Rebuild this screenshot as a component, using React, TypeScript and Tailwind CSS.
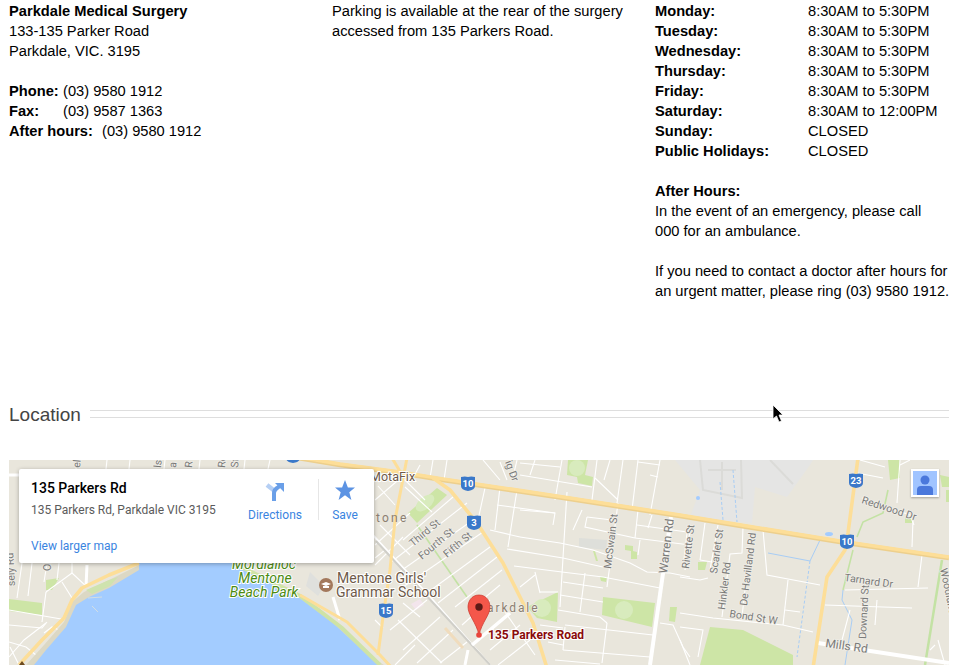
const hours = [
  ['Monday:', '8:30AM to 5:30PM'],
  ['Tuesday:', '8:30AM to 5:30PM'],
  ['Wednesday:', '8:30AM to 5:30PM'],
  ['Thursday:', '8:30AM to 5:30PM'],
  ['Friday:', '8:30AM to 5:30PM'],
  ['Saturday:', '8:30AM to 12:00PM'],
  ['Sunday:', 'CLOSED'],
  ['Public Holidays:', 'CLOSED'],
]

// all map coordinates are page coordinates, the viewBox starts at the map's corner
const streets = [
  // left of the bay
  'M22 563 L17 598', 'M32 563 L28 596', 'M47 563 L44 582', 'M59 563 L57 580', 'M46 592 L72 573 L87 587', 'M72 563 L72 573', 'M62 582 L72 598',
  'M46 592 L42 622', 'M9 610 L67 620', 'M9 625 L42 628 L47 622', 'M9 642 L26 647 L36 655', 'M9 657 L24 640 L46 623', 'M10 647 L19 665', 'M44 633 L52 627 L59 630 L56 640',
  'M77 460 L76 469', 'M107 460 L106 469', 'M130 460 L129 469', 'M165 460 L164 469', 'M200 460 L199 469', 'M245 460 L244 469', 'M270 460 L268 469',
  // north west of highway 3
  'M403 540 L453 497', 'M390 563 L467 503', 'M395 575 L473 520', 'M403 587 L483 532', 'M420 598 L490 547', 'M438 603 L497 557', 'M455 607 L502 570',
  'M410 513 L375 545', 'M403 537 L375 565', 'M385 550 L375 558', 'M405 487 L432 512', 'M403 478 L425 500', 'M420 465 L414 476', 'M433 460 L430 478', 'M447 460 L444 480',
  'M375 500 L403 476', 'M378 486 L395 505', 'M380 525 L410 555',
  // south of the railway
  'M390 630 L427 600', 'M403 650 L440 617', 'M417 663 L453 630', 'M440 663 L467 642', 'M398 620 L442 663', 'M403 603 L420 617', 'M375 620 L383 628', 'M395 665 L415 645',
  'M470 610 L500 585', 'M462 625 L490 600', 'M490 650 L520 625', 'M498 665 L530 640', 'M505 612 L535 655',
  // north east of highway 3
  'M485 488 L478 520', 'M500 487 L495 530', 'M517 490 L508 547', 'M483 460 L500 480', 'M517 460 L513 477', 'M535 460 L530 475', 'M500 462 L507 480',
  'M520 463 L560 467', 'M520 475 L592 487', 'M562 460 L555 500', 'M597 460 L592 500', 'M610 460 L604 480', 'M623 460 L617 503', 'M638 460 L632 510', 'M660 460 L650 515',
  'M595 478 L618 500', 'M638 462 L660 465', 'M650 475 L658 477', 'M520 510 L555 513 L553 525', 'M497 505 L555 513', 'M490 530 L520 537',
  // grid between highway 3 and Warren Rd
  'M567 492 L560 607', 'M565 627 L563 650', 'M618 503 L607 587', 'M607 623 L602 663', 'M520 537 L560 543 L593 550 L630 563 L647 572 L670 573 L690 577',
  'M507 549 L563 558 L603 567', 'M514 566 L562 572 L603 577 L660 588', 'M563 582 L603 588', 'M560 595 L603 602', 'M558 610 L600 617 L607 623',
  'M565 625 L653 635', 'M563 650 L650 657', 'M535 572 L540 593', 'M520 587 L535 575', 'M540 592 L558 592', 'M587 517 L585 527 L635 538', 'M587 517 L612 520',
  'M635 538 L638 510', 'M637 525 L687 532', 'M635 538 L690 545', 'M640 540 L638 555', 'M652 515 L648 528', 'M687 533 L683 568', 'M582 510 L573 530', 'M585 573 L580 612',
  'M660 623 L673 625 L683 647 L690 657', 'M690 530 L685 570', 'M540 625 L563 628', 'M548 642 L563 645', 'M555 660 L600 664',
  // east of Warren Rd
  'M705 523 L700 560', 'M718 525 L710 570', 'M743 527 L742 553 L730 554 L722 617', 'M745 590 L742 617', 'M680 577 L700 580 L708 578', 'M680 613 L713 618 L783 625',
  'M680 627 L703 630 L698 657', 'M700 560 L712 562', 'M680 640 L690 665', 'M763 530 L767 575 L820 585', 'M845 590 L928 588', 'M788 580 L783 625', 'M783 625 L813 632',
  'M785 610 L800 612', 'M825 605 L912 608', 'M922 555 L918 587', 'M913 520 L912 547', 'M900 460 L897 503', 'M862 498 L910 515 L914 525', 'M860 460 L885 467', 'M857 473 L883 478',
  'M900 465 L910 460', 'M877 600 L875 625', 'M850 610 L842 640', 'M938 640 L945 665', 'M935 645 L930 650',
]

function Shield({ x, y, label }: { x: number; y: number; label: string }) {
  return (
    <g transform={`translate(${x} ${y})`}>
      <path d="M-7 -6 Q-3 -7 0 -6 Q3 -7 7 -6 V3 Q7 7 0 8 Q-7 7 -7 3 Z" fill="#3a78c9" />
      <text textAnchor="middle" y="3.5" fontSize="9.5" fontWeight="700" fill="#fff" fontFamily="Roboto, sans-serif">
        {label}
      </text>
    </g>
  )
}

function MapLabel({ x, y, rotate = 0, children, size = 10.5 }: { x: number; y: number; rotate?: number; children: string; size?: number }) {
  return (
    <text
      transform={`translate(${x} ${y}) rotate(${rotate})`}
      fontSize={size}
      fill="#7a7a78"
      stroke="#f0eee8"
      strokeWidth="1.6"
      paintOrder="stroke"
      fontFamily="Roboto, sans-serif"
    >
      {children}
    </text>
  )
}

function MapDrawing() {
  return (
    <svg viewBox="9 460 940 205" className="block w-[940px] h-[205px]">
      <rect x="9" y="460" width="940" height="205" fill="#e9e6dc" />

      {/* airport */}
      <path d="M675 460 H813 L810 465 L787 497 L755 487 L752 523 L690 517 L700 490 Z" fill="#e5e5e4" />
      <path d="M700 460 L703 490 L742 498 L741 460 M708 470 H736 M722 462 V490 M770 460 L793 484" fill="none" stroke="#dbdbd8" strokeWidth="2" />

      {/* parks */}
      <g fill="#cde5a6">
        <path d="M408 513 L437 488 L447 495 L417 523 Z" />
        <path d="M568 460 H588 L585 475 L593 477 L592 486 L578 483 L577 477 L567 475 Z" />
        <path d="M558 592 L557 622 L537 618 L527 607 Z" />
        <path d="M603 597 L655 603 L652 627 L602 615 Z" />
        <path d="M670 607 L677 607 L675 622 L669 621 Z" />
        <path d="M625 545 L633 546 L633 551 L637 552 L637 559 L631 559 L631 551 L625 550 Z" />
        <path d="M600 577 L607 577 L606 582 L601 581 Z" />
        <path d="M593 551 L595 551 L598 561 L596 561 Z" />
        <path d="M9 599 L42 603 L42 615 L9 611 Z" />
        <path d="M46 580 L59 578 L52 590 L46 590 Z" />
        <path d="M710 627 L743 630 L777 647 L793 655 V665 H700 Z" />
        <path d="M698 562 L707 562 L705 570 L698 570 Z" />
        <path d="M888 460 H900 V478 L890 480 Z" />
        <path d="M940 475 L949 477 V487 L942 487 Z" />
        <path d="M905 517 L913 518 L912 523 L905 523 Z" />
        <path d="M946 490 H949 V502 H946 Z" />
      </g>
      <g fill="#d8ebbd">
        <circle cx="542" cy="608" r="9" />
        <circle cx="624" cy="610" r="9" />
        <circle cx="577" cy="468" r="8" />
        <ellipse cx="425" cy="503" rx="11" ry="6" transform="rotate(-40 425 503)" />
      </g>
      <path d="M579 538 L607 540 L606 550 L579 547 Z" fill="#dedfda" />
      <path d="M411 604 L420 599 L424 605 L416 610 Z" fill="#f3e5ec" />

      {/* streams */}
      <g fill="none" stroke="#a8cdf5" strokeWidth="1">
        <path d="M768 553 L810 561 L820 540" />
        <path d="M810 561 L797 657" strokeDasharray="3 2" />
        <path d="M720 482 L723 520 M733 470 L737 522" strokeDasharray="3 2" />
        <path d="M843 590 L842 600 L852 620 L845 665" />
      </g>
      <g fill="none" stroke="#c3e2a4" strokeWidth="1.6">
        <path d="M888 490 L883 513 L863 522 L857 537" />
        <path d="M853 550 L843 590" />
        <path d="M417 525 L467 597" />
        <path d="M942 560 L925 665" strokeWidth="2.5" />
      </g>
      <circle cx="698" cy="498" r="2" fill="#a3ccff" />
      <ellipse cx="829" cy="534" rx="4" ry="2" fill="#a3ccff" />

      {/* streets */}
      <g fill="none" stroke="#ffffff" strokeWidth="1.1">
        {streets.map((d, i) => (
          <path key={i} d={d} />
        ))}
      </g>

      {/* railway with its white reserve */}
      <g fill="none">
        <path d="M370 532 L430 597 L490 665" stroke="#fff" strokeWidth="2" />
        <path d="M376 541 L436 606 L490 665" stroke="#d0cfc9" strokeWidth="2" />
        <path d="M445 628 L463 648" stroke="#f0dcbd" strokeWidth="3" />
      </g>

      {/* bay */}
      <path
        d="M26 665 L44 645 L64 622 L72 602 L84 592 L109 580 L139 565 L232 563 L296 593 L336 623 L376 660 L384 665 Z"
        fill="#dcd8c4"
      />
      <path
        d="M34 665 L46 650 L66 627 L76 605 L89 597 L109 588 L139 570 L139 560 L233 560 L293 593 L333 623 L373 660 L380 665 Z"
        fill="#a3ccff"
      />
      <path d="M86 590 L109 580 L118 577 L110 586 L92 594 Z" fill="#cfe3ae" />
      <path d="M92 606 L98 612 M88 598 L102 597" stroke="#d3dee3" strokeWidth="1" fill="none" />
      <path d="M233 563 L300 596 L342 628 L380 665" fill="none" stroke="#cfe3a6" strokeWidth="4" />
      <path d="M310 572 L324 586 L318 596 L306 586 Z" fill="#dfe0dd" />

      {/* wider white roads */}
      <g fill="none" stroke="#fff" strokeWidth="3">
        <path d="M671 517 L650 665" strokeWidth="4" />
        <path d="M472 645 L510 613" strokeWidth="3.5" />
        <path d="M465 665 L468 650" />
        <path d="M818 643 L949 663" strokeWidth="4" />
        <path d="M333 597 L340 620" />
        <path d="M87 565 L86 587" />
        <path d="M9 475 L19 475" />
      </g>

      {/* yellow roads */}
      <g fill="none" strokeLinejoin="round">
        <g stroke="#edcf8c" strokeWidth="4.6">
          <path d="M292 457 L340 465 L400 473 L443 480 L557 497 L680 516 L747 527 L840 542 L949 558" />
        </g>
        <g stroke="#fdde98" strokeWidth="3.6">
          <path d="M292 456 L340 464 L400 472 L443 479 L557 496 L680 515 L747 526 L840 541 L949 557" />
          <path d="M433 478 L450 490 L477 523 L503 563 L520 597 L533 623 L547 668" />
          <path d="M858 458 L848 533 L845 550 L827 577 L813 668" />
          <path d="M407 458 L395 520 L390 570 L383 617 L378 655" strokeWidth="3" />
          <path d="M392 458 L401 473" strokeWidth="3" />
          <path d="M19 665 L42 640 L64 618 L72 600 L82 588 L109 575 L139 563" />
          <path d="M300 595 L347 622 L380 655 L392 668" strokeWidth="3" />
        </g>
      </g>

      <Shield x={293} y={455} label="" />
      <Shield x={468} y={483} label="10" />
      <Shield x={474} y={522} label="3" />
      <Shield x={386} y={610} label="15" />
      <Shield x={856} y={480} label="23" />
      <Shield x={847} y={541} label="10" />

      {/* street names */}
      <MapLabel x={413} y={547} rotate={-40}>Third St</MapLabel>
      <MapLabel x={422} y={560} rotate={-40}>Fourth St</MapLabel>
      <MapLabel x={447} y={558} rotate={-40}>Fifth St</MapLabel>
      <MapLabel x={611} y={569} rotate={-83}>McSwain St</MapLabel>
      <MapLabel x={667} y={574} rotate={-83} size={12}>Warren Rd</MapLabel>
      <MapLabel x={689} y={569} rotate={-83}>Rivette St</MapLabel>
      <MapLabel x={717} y={574} rotate={-82}>Scarlet St</MapLabel>
      <MapLabel x={725} y={610} rotate={-83}>Hinkler Rd</MapLabel>
      <MapLabel x={747} y={606} rotate={-83}>De Havilland Rd</MapLabel>
      <MapLabel x={729} y={617} rotate={9}>Bond St W</MapLabel>
      <MapLabel x={861} y={503} rotate={18}>Redwood Dr</MapLabel>
      <MapLabel x={844} y={581} rotate={8}>Tarnard Dr</MapLabel>
      <MapLabel x={866} y={639} rotate={-87}>Downard St</MapLabel>
      <MapLabel x={825} y={647} rotate={8} size={12}>Mills Rd</MapLabel>
      <MapLabel x={940} y={569} rotate={78}>Woodlands D</MapLabel>
      <MapLabel x={505} y={462} rotate={70}>ig Dr</MapLabel>
      <MapLabel x={15} y={586} rotate={-93}>sely Rd</MapLabel>
      <MapLabel x={51} y={571} rotate={-90}>Ol</MapLabel>
      <MapLabel x={80} y={468} rotate={-85}>ell</MapLabel>
      <MapLabel x={161} y={468} rotate={-85}>ls</MapLabel>
      <MapLabel x={176} y={468} rotate={-85}>a</MapLabel>
      <MapLabel x={192} y={468} rotate={-85}>R</MapLabel>
      <MapLabel x={225} y={468} rotate={-85}>Rc</MapLabel>
      <MapLabel x={238} y={468} rotate={-85}>St</MapLabel>

      {/* place names */}
      <text x="370" y="481" fontSize="12.5" fill="#6e5a49" stroke="#fff" strokeWidth="2" paintOrder="stroke" fontFamily="Roboto, sans-serif">MotaFix</text>
      <text x="376" y="522" fontSize="12" fill="#8c7f72" letterSpacing="2.2" fontFamily="Roboto, sans-serif">tone</text>
      <text x="487" y="612" fontSize="12" fill="#8c7f72" letterSpacing="1.9" stroke="#f1eee7" strokeWidth="1.5" paintOrder="stroke" fontFamily="Roboto, sans-serif">arkdale</text>
      <g fontSize="14" fill="#6e5a49" stroke="#fff" strokeWidth="2" paintOrder="stroke" fontFamily="Roboto, sans-serif">
        <text x="337" y="583">Mentone Girls'</text>
        <text x="336" y="597">Grammar School</text>
      </g>
      <g fontSize="14" fontStyle="italic" fill="#4b8a12" textAnchor="middle" stroke="#fff" strokeWidth="2" paintOrder="stroke" fontFamily="Roboto, sans-serif">
        <text x="264" y="569">Mordialloc</text>
        <text x="265" y="583">Mentone</text>
        <text x="264" y="597">Beach Park</text>
      </g>

      {/* school marker */}
      <circle cx="326" cy="585" r="7" fill="#a3785c" />
      <path d="M321 584 L326 582 L331 584 L326 586 Z M323 586 V588 H329 V586" fill="#fff" />

      {/* pin */}
      <path d="M479 595 C471 595 468 602 468 607 C468 615 476 622 479 635 C482 622 490 615 490 607 C490 602 487 595 479 595 Z" fill="#f4574a" stroke="#c9362b" strokeWidth="0.7" />
      <circle cx="479" cy="607" r="3.7" fill="#5c1a16" />
      <circle cx="479" cy="635" r="2.8" fill="#e8453c" />
      <text x="488" y="639" fontSize="12" fontWeight="700" fill="#8a0a0a" stroke="#fff" strokeWidth="2" paintOrder="stroke" fontFamily="Roboto, sans-serif">135 Parkers Road</text>

      <path d="M19 665 L22 661 L25 665 Z" fill="#6e4a1e" />
    </svg>
  )
}

function MapCard() {
  return (
    <div className="absolute left-[10px] top-[9px] w-[355px] h-[94px] bg-white rounded-[2px] shadow-[0_1px_4px_rgba(0,0,0,0.3)] font-['Roboto',sans-serif]">
      <div className="absolute left-[12px] top-[9px] text-[14px] leading-[20px] font-medium text-black">135 Parkers Rd</div>
      <div className="absolute left-[12px] top-[33px] text-[12px] leading-[16px] text-[#5b5b5b]">135 Parkers Rd, Parkdale VIC 3195</div>
      <a className="absolute left-[12px] top-[69px] text-[12px] leading-[16px] text-[#3a84df]">View larger map</a>
      <div className="absolute left-[229px] top-[9px] flex flex-col items-center w-[54px]">
        <svg width="22" height="24" viewBox="0 0 22 24">
          <path d="M3 7 L12 14" stroke="#b5cff4" strokeWidth="4.5" fill="none" />
          <path d="M10 23 V15 Q10 12 13 10 L17 7" stroke="#6a9fe8" strokeWidth="4" fill="none" />
          <path d="M11 5 H20 V14 Z" fill="#6a9fe8" />
        </svg>
        <span className="mt-[5px] text-[12px] leading-[16px] text-[#3a84df]">Directions</span>
      </div>
      <div className="absolute left-[299px] top-[10px] h-[41px] border-l border-[#e6e6e6]" />
      <div className="absolute left-[310px] top-[9px] flex flex-col items-center w-[32px]">
        <svg width="24" height="24" viewBox="0 0 24 24">
          <polygon points="12,2 14.9,9.6 22,9.6 16.3,14.3 18.4,22 12,17.3 5.6,22 7.7,14.3 2,9.6 9.1,9.6" fill="#5c93e3" />
        </svg>
        <span className="mt-[5px] text-[12px] leading-[16px] text-[#3a84df]">Save</span>
      </div>
    </div>
  )
}

export default function App() {
  return (
    <div className="relative h-[665px] overflow-hidden bg-white pl-[9px] pr-[17px] pt-[1px] font-['Liberation_Sans',sans-serif] text-[11pt] leading-[20px] text-black">
      <div className="grid grid-cols-3 gap-[29px] h-[300px]">
        <div>
          <div className="font-bold">Parkdale Medical Surgery</div>
          <div>133-135 Parker Road</div>
          <div>Parkdale, VIC. 3195</div>
          <div className="mt-[20px] flex">
            <b className="w-[54px]">Phone:</b>
            <span>(03) 9580 1912</span>
          </div>
          <div className="flex">
            <b className="w-[54px]">Fax:</b>
            <span>(03) 9587 1363</span>
          </div>
          <div className="flex">
            <b className="w-[93px]">After hours:</b>
            <span>(03) 9580 1912</span>
          </div>
        </div>
        <div className="whitespace-nowrap">
          Parking is available at the rear of the surgery
          <br />
          accessed from 135 Parkers Road.
        </div>
        <div className="whitespace-nowrap">
          {hours.map(([day, time]) => (
            <div key={day} className="flex">
              <b className="w-[153px]">{day}</b>
              <span>{time}</span>
            </div>
          ))}
          <div className="mt-[20px] font-bold">After Hours:</div>
          <div>
            In the event of an emergency, please call
            <br />
            000 for an ambulance.
          </div>
          <div className="mt-[20px]">
            If you need to contact a doctor after hours for
            <br />
            an urgent matter, please ring (03) 9580 1912.
          </div>
        </div>
      </div>

      <div className="mt-[103px] flex items-center gap-[9px] h-[20px]">
        <h2 className="mt-[2px] text-[19px] leading-[20px] text-[#444]">Location</h2>
        <div className="flex-1 h-[8px] border-y border-[#dedede]" />
      </div>

      <div className="relative mt-[36px] h-[205px] overflow-hidden">
        <MapDrawing />
        <MapCard />
        <div className="absolute left-[902px] top-[9px] w-[28px] h-[28px] border-2 border-white bg-[#a0c4ff] shadow-[0_1px_2px_rgba(0,0,0,0.3)]">
          <svg viewBox="0 0 24 24" className="w-full h-full">
            <circle cx="12" cy="9" r="4.5" fill="#4a78dc" />
            <path d="M4 24 V19 Q4 15 8 15 H16 Q20 15 20 19 V24 Z" fill="#4a78dc" />
          </svg>
        </div>
      </div>

      <svg width="12" height="20" viewBox="0 0 12 20" className="absolute left-[772px] top-[404px]">
        <path d="M1 1 V15 L4.5 12 L7 18 L9.5 17 L7 11 H11 Z" fill="#000" stroke="#fff" strokeWidth="0.8" />
      </svg>
    </div>
  )
}
